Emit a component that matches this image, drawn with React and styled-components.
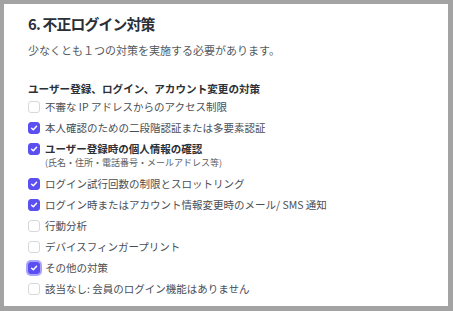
import React from "react";
import styled, { createGlobalStyle } from "styled-components";

const GlobalStyle = createGlobalStyle`
  html, body {
    margin: 0;
    padding: 0;
    background: #a3a3a3;
  }
  body {
    font-family: "Noto Sans CJK JP", "Noto Sans", sans-serif;
  }
`;

const items = [
  { label: "不審な IP アドレスからのアクセス制限", checked: false },
  { label: "本人確認のための二段階認証または多要素認証", checked: true },
  {
    label: "ユーザー登録時の個人情報の確認",
    note: "(氏名・住所・電話番号・メールアドレス等)",
    checked: true,
    bold: true,
  },
  { label: "ログイン試行回数の制限とスロットリング", checked: true },
  { label: "ログイン時またはアカウント情報変更時のメール/ SMS 通知", checked: true },
  { label: "行動分析", checked: false },
  { label: "デバイスフィンガープリント", checked: false },
  { label: "その他の対策", checked: true, focused: true },
  { label: "該当なし: 会員のログイン機能はありません", checked: false },
];

const App = () => {
  return (
    <>
      <GlobalStyle />
      <Panel>
        <Title>6. 不正ログイン対策</Title>
        <Lead>少なくとも１つの対策を実施する必要があります。</Lead>
        <GroupTitle>ユーザー登録、ログイン、アカウント変更の対策</GroupTitle>
        <List>
          {items.map((item) => (
            <Row key={item.label}>
              <Box $checked={item.checked} $focused={item.focused}>
                {item.checked && (
                  <svg width="8" height="8" viewBox="0 0 10 10">
                    <path
                      d="M2 5.2 L4.2 7.3 L8.2 2.8"
                      fill="none"
                      stroke="#fff"
                      strokeWidth="1.8"
                      strokeLinecap="round"
                      strokeLinejoin="round"
                    />
                  </svg>
                )}
              </Box>
              <LabelWrap $note={!!item.note}>
                <Label $bold={item.bold}>{item.label}</Label>
                {item.note && <Note>{item.note}</Note>}
              </LabelWrap>
            </Row>
          ))}
        </List>
      </Panel>
    </>
  );
};

const Panel = styled.div`
  margin: 4px 5px 5px 4px;
  height: 302px;
  background: #ffffff;
  padding: 9px 0 0 24px;
  box-sizing: border-box;
  display: flex;
  flex-direction: column;
`;

const Title = styled.h1`
  margin: 0;
  font-size: 14.8px;
  line-height: 22px;
  font-weight: 700;
  color: #2b2f36;
  letter-spacing: -0.8px;
`;

const Lead = styled.p`
  margin: 7px 0 0;
  font-size: 11px;
  line-height: 16px;
  color: #555a60;
`;

const GroupTitle = styled.h2`
  margin: 23px 0 0;
  font-size: 10.6px;
  line-height: 16px;
  font-weight: 700;
  color: #2b2f36;
`;

const List = styled.div`
  display: flex;
  flex-direction: column;
  gap: 5px;
  margin-top: 2px;
`;

const Row = styled.div`
  display: flex;
  align-items: flex-start;
  gap: 5px;
`;

const Box = styled.span`
  width: 12px;
  height: 12px;
  margin-top: 2px;
  flex: none;
  box-sizing: border-box;
  border-radius: 3px;
  display: flex;
  align-items: center;
  justify-content: center;
  background: ${(p) => (p.$checked ? "#5b4ff2" : "#fff")};
  border: 1px solid ${(p) => (p.$checked ? "#5b4ff2" : "#d6d8dc")};
  box-shadow: ${(p) => (p.$focused ? "0 0 0 2px #a9a3fa" : "none")};
`;

const LabelWrap = styled.div`
  display: flex;
  flex-direction: column;
  padding-bottom: ${(p) => (p.$note ? "2px" : "0")};
`;

const Label = styled.span`
  font-size: 10.5px;
  line-height: 16px;
  font-weight: ${(p) => (p.$bold ? 700 : 400)};
  color: ${(p) => (p.$bold ? "#2b2f36" : "#4a4e55")};
`;

const Note = styled.span`
  font-size: 9px;
  line-height: 12px;
  color: #5a5e64;
`;

export default App;
